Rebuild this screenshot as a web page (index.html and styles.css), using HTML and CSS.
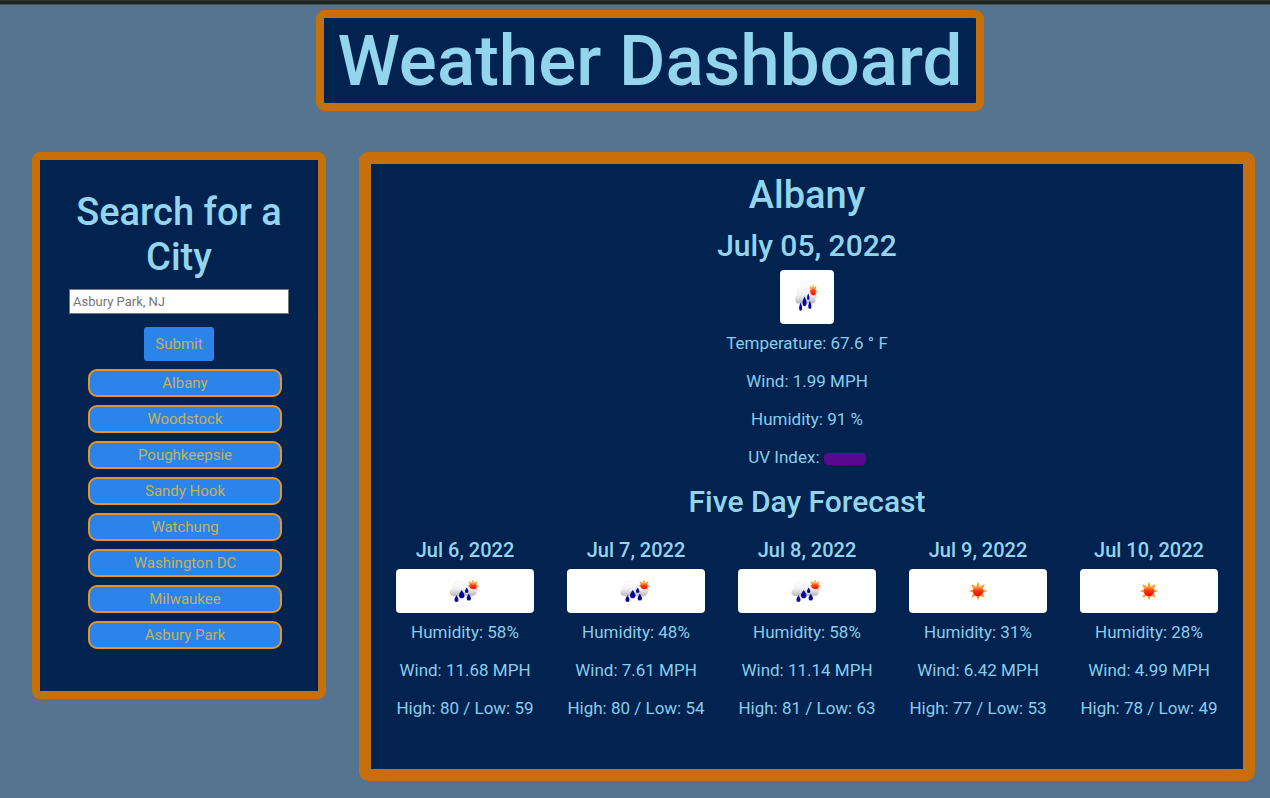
FILE: index.html
```html
<!DOCTYPE html>
<html lang="en">
<head>
<meta charset="utf-8">
<meta name="viewport" content="width=device-width, initial-scale=1">
<title>Weather Dashboard</title>
<link rel="stylesheet" href="styles.css">
</head>
<body>
<svg class="defs" aria-hidden="true">
  <defs>
    <linearGradient id="sun-fill" x1="0" y1="0" x2="0" y2="1">
      <stop offset="0" stop-color="#ffb860"/>
      <stop offset="0.45" stop-color="#ff3a10"/>
      <stop offset="1" stop-color="#ff0000"/>
    </linearGradient>
    <linearGradient id="cloud-fill" x1="0" y1="0" x2="0" y2="1">
      <stop offset="0" stop-color="#ffffff"/>
      <stop offset="0.5" stop-color="#f2f2f2"/>
      <stop offset="1" stop-color="#b8b8b8"/>
    </linearGradient>
    <symbol id="sun" viewBox="0 0 20 20">
      <path fill="#ff9c1c" d="M10 0.500l1.600 4.500h-3.200zM10 19.500l1.600-4.500h-3.200zM0.500 10l4.500-1.600v3.200zM19.500 10l-4.500-1.600v3.200zM3.300 3.300l4.200 1.700-2.500 2.500zM16.700 3.300l-1.700 4.200-2.500-2.500zM3.300 16.700l1.700-4.200 2.500 2.500zM16.700 16.700l-4.200-1.700 2.500-2.500z"/>
      <circle cx="10" cy="10" r="5.300" fill="url(#sun-fill)"/>
    </symbol>
    <symbol id="rain" viewBox="0 0 32 24" preserveAspectRatio="none">
      <use href="#sun" x="17" y="0" width="14" height="14"/>
      <path fill="url(#cloud-fill)" stroke="#e6e6e6" stroke-width="0.400" d="M4 17C-0.500 17 -0.500 11 3 10C3 5 6 2.500 9.500 2.500C13 2.500 15 4 16 6.500C18.500 6 20 7 20.500 9C22.500 10.300 25 10.800 27 10C28.500 13 27.500 17 24 17Z"/>
      <path fill="#06069a" stroke="#fff" stroke-opacity="0.300" stroke-width="0.300" d="M12.700 11c1.900 2.800 2.800 3.900 2.800 5.400a2.800 2.800 0 0 1-5.600 0c0-1.500.9-2.600 2.800-5.400zM7.500 16c1.500 2.700 2.100 3.600 2.100 4.900a2.100 2.100 0 0 1-4.200 0c0-1.300.6-2.200 2.100-4.900zM19.800 14.500c1.500 2.700 2.200 3.600 2.200 4.900a2.200 2.200 0 0 1-4.400 0c0-1.300.7-2.200 2.200-4.900zM17.700 8.500c1.200 2 1.700 2.800 1.700 3.900a1.700 1.700 0 0 1-3.400 0c0-1.100.5-1.900 1.700-3.900z"/>
    </symbol>
  </defs>
</svg>
<div class="top-strip"></div>
<div class="page">
  <header class="header">
    <h1 class="title">Weather Dashboard</h1>
  </header>
  <main class="layout">
    <aside class="search">
      <form class="search-form">
        <h2 class="heading"><label for="city">Search for a City</label></h2>
        <input class="city-input" id="city" type="text" placeholder="Asbury Park, NJ">
        <button class="submit" type="button">Submit</button>
      </form>
      <div class="history">
        <button class="city" type="button">Albany</button>
        <button class="city" type="button">Woodstock</button>
        <button class="city" type="button">Poughkeepsie</button>
        <button class="city" type="button">Sandy Hook</button>
        <button class="city" type="button">Watchung</button>
        <button class="city" type="button">Washington DC</button>
        <button class="city" type="button">Milwaukee</button>
        <button class="city" type="button">Asbury Park</button>
      </div>
    </aside>
    <section class="weather">
      <div class="current">
        <h2 class="heading">Albany</h2>
        <h3 class="subheading">July 05, 2022</h3>
        <div class="current-icon"><svg class="rain-tall"><use href="#rain"/></svg></div>
        <div class="stats">
          <p>Temperature: 67.6 ° F</p>
          <p>Wind: 1.99 MPH</p>
          <p>Humidity: 91 %</p>
          <p>UV Index: <span class="uv"></span></p>
        </div>
      </div>
      <h3 class="subheading">Five Day Forecast</h3>
      <div class="forecast">
        <article class="day">
          <h4 class="date">Jul 6, 2022</h4>
          <div class="day-icon"><svg class="rain"><use href="#rain"/></svg></div>
          <div class="stats"><p>Humidity: 58%</p><p>Wind: 11.68 MPH</p><p>High: 80 / Low: 59</p></div>
        </article>
        <article class="day">
          <h4 class="date">Jul 7, 2022</h4>
          <div class="day-icon"><svg class="rain"><use href="#rain"/></svg></div>
          <div class="stats"><p>Humidity: 48%</p><p>Wind: 7.61 MPH</p><p>High: 80 / Low: 54</p></div>
        </article>
        <article class="day">
          <h4 class="date">Jul 8, 2022</h4>
          <div class="day-icon"><svg class="rain"><use href="#rain"/></svg></div>
          <div class="stats"><p>Humidity: 58%</p><p>Wind: 11.14 MPH</p><p>High: 81 / Low: 63</p></div>
        </article>
        <article class="day">
          <h4 class="date">Jul 9, 2022</h4>
          <div class="day-icon"><svg class="sun"><use href="#sun"/></svg></div>
          <div class="stats"><p>Humidity: 31%</p><p>Wind: 6.42 MPH</p><p>High: 77 / Low: 53</p></div>
        </article>
        <article class="day">
          <h4 class="date">Jul 10, 2022</h4>
          <div class="day-icon"><svg class="sun"><use href="#sun"/></svg></div>
          <div class="stats"><p>Humidity: 28%</p><p>Wind: 4.99 MPH</p><p>High: 78 / Low: 49</p></div>
        </article>
      </div>
    </section>
  </main>
</div>
</body>
</html>
```

FILE: styles.css
```css
* { box-sizing: border-box; }

body {
  margin: 0;
  background: #55748f;
  color: #87ceeb;
  font-family: Roboto, "Liberation Sans", sans-serif;
  font-size: 17px;
  line-height: 26px;
}

h1, h2, h3, h4, p { margin: 0; }
h1, h2, h3, h4 { color: #93d5ec; font-weight: 500; }

.defs { display: block; width: 0; height: 0; }

.top-strip {
  height: 5px;
  background: #222422;
  border-top: 1px solid #303837;
  border-bottom: 1px solid #4b4946;
}

.page { padding: 5px 15px 17px 32px; }

.header {
  display: flex;
  justify-content: center;
  padding-left: 13px;
}

.title {
  padding: 0 13px;
  border: 8px solid #c76f09;
  border-radius: 9px;
  background: #022250;
  font-size: 71px;
  line-height: 85px;
}

.layout {
  display: grid;
  grid-template-columns: minmax(0, 294fr) minmax(0, 896fr);
  gap: 33px;
  align-items: start;
  margin-top: 41px;
}

.search {
  padding: 30px 29px 42px;
  border: 8px solid #c76f09;
  border-radius: 8px;
  background: #022250;
}

.search-form {
  display: flex;
  flex-direction: column;
  align-items: center;
}

.heading {
  font-size: 38px;
  line-height: 45px;
  text-align: center;
}

.city-input {
  width: 100%;
  height: 25px;
  margin: 9px 0 13px;
  padding: 0 3px;
  border: 1px solid #767676;
  border-radius: 0;
  background: #fff;
  color: #222;
  font: 13px/20px Roboto, "Liberation Sans", sans-serif;
}

.city-input::placeholder { color: #757575; }

.submit, .city {
  background: #2a84e9;
  color: #c5b15c;
  font: 15px/24px Roboto, "Liberation Sans", sans-serif;
}

.submit {
  height: 34px;
  padding: 0 11px;
  border: 0;
  border-radius: 3px;
}

.history {
  display: flex;
  flex-direction: column;
  gap: 8px;
  margin: 8px 7px 0 19px;
}

.city {
  height: 28px;
  padding: 0;
  border: 2px solid #e69424;
  border-radius: 9px;
}

.weather {
  padding: 9px 25px 48px;
  border: 12px solid #c76f09;
  border-radius: 9px;
  background: #022250;
  text-align: center;
}

.current {
  display: flex;
  flex-direction: column;
  align-items: center;
  margin-bottom: 14px;
}

.subheading {
  font-size: 30px;
  line-height: 36px;
}

.current .subheading { margin: 10px 0 6px; }

.current-icon, .day-icon {
  display: flex;
  align-items: center;
  justify-content: center;
  border-radius: 4px;
  background: #fff;
}

.current-icon {
  width: 54px;
  height: 54px;
  margin-bottom: 6px;
}

.rain-tall { width: 24px; height: 29px; }
.rain { width: 32px; height: 24px; }
.sun { width: 20px; height: 20px; }

.stats {
  display: flex;
  flex-direction: column;
  gap: 12px;
}

.uv {
  display: inline-block;
  width: 42px;
  height: 12px;
  border-radius: 4px;
  background: #58098d;
  vertical-align: -2px;
}

.forecast {
  display: grid;
  grid-template-columns: repeat(5, minmax(0, 1fr));
  gap: 33px;
  margin-top: 17px;
}

.date { font-size: 20px; }

.day-icon {
  height: 44px;
  margin: 6px 0;
}
```
